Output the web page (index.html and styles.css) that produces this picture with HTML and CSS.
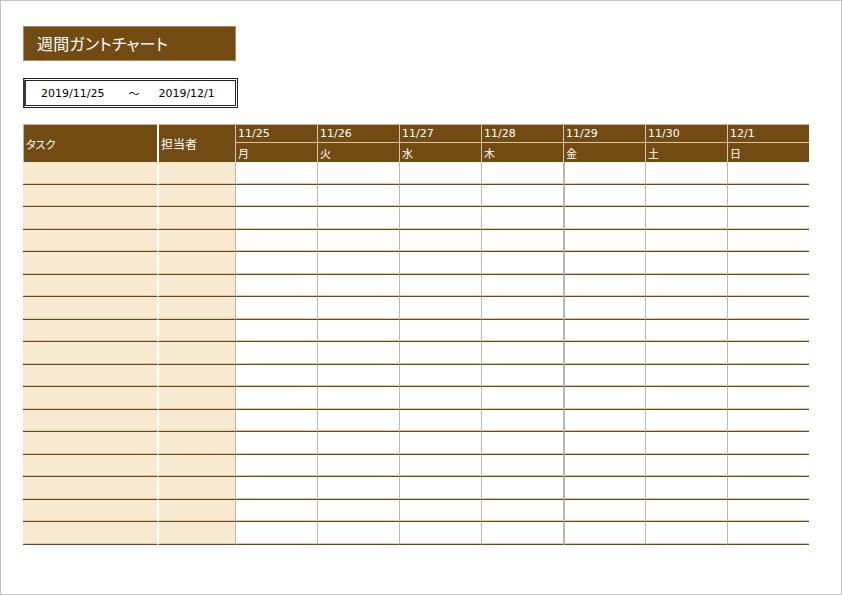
FILE: index.html
```html
<!DOCTYPE html>
<html lang="ja">
<head>
<meta charset="utf-8">
<title>週間ガントチャート</title>
<link rel="stylesheet" href="styles.css">
</head>
<body>
<div class="page">
  <div class="title">週間ガントチャート</div>
  <div class="range">
    <span class="d1">2019/11/25</span>
    <span class="tilde">～</span>
    <span class="d2">2019/12/1</span>
  </div>
  <table class="gantt">
    <colgroup>
      <col class="w-task"><col class="w-owner">
      <col class="w-day"><col class="w-day"><col class="w-day"><col class="w-day"><col class="w-day"><col class="w-day"><col class="w-last">
    </colgroup>
    <thead>
      <tr class="hr1">
        <th rowspan="2" class="h-task">タスク</th>
        <th rowspan="2" class="h-owner">担当者</th>
        <th class="hd">11/25</th><th class="hd">11/26</th><th class="hd">11/27</th><th class="hd">11/28</th><th class="hd">11/29</th><th class="hd">11/30</th><th class="hd">12/1</th>
      </tr>
      <tr class="hr2">
        <th class="hw">月</th><th class="hw">火</th><th class="hw">水</th><th class="hw">木</th><th class="hw">金</th><th class="hw">土</th><th class="hw">日</th>
      </tr>
    </thead>
    <tbody>
      <tr><td class="task"></td><td class="owner"></td><td class="day"></td><td class="day"></td><td class="day"></td><td class="day"></td><td class="day fri"></td><td class="day"></td><td class="day"></td></tr>
      <tr><td class="task"></td><td class="owner"></td><td class="day"></td><td class="day"></td><td class="day"></td><td class="day"></td><td class="day fri"></td><td class="day"></td><td class="day"></td></tr>
      <tr><td class="task"></td><td class="owner"></td><td class="day"></td><td class="day"></td><td class="day"></td><td class="day"></td><td class="day fri"></td><td class="day"></td><td class="day"></td></tr>
      <tr><td class="task"></td><td class="owner"></td><td class="day"></td><td class="day"></td><td class="day"></td><td class="day"></td><td class="day fri"></td><td class="day"></td><td class="day"></td></tr>
      <tr><td class="task"></td><td class="owner"></td><td class="day"></td><td class="day"></td><td class="day"></td><td class="day"></td><td class="day fri"></td><td class="day"></td><td class="day"></td></tr>
      <tr><td class="task"></td><td class="owner"></td><td class="day"></td><td class="day"></td><td class="day"></td><td class="day"></td><td class="day fri"></td><td class="day"></td><td class="day"></td></tr>
      <tr><td class="task"></td><td class="owner"></td><td class="day"></td><td class="day"></td><td class="day"></td><td class="day"></td><td class="day fri"></td><td class="day"></td><td class="day"></td></tr>
      <tr><td class="task"></td><td class="owner"></td><td class="day"></td><td class="day"></td><td class="day"></td><td class="day"></td><td class="day fri"></td><td class="day"></td><td class="day"></td></tr>
      <tr><td class="task"></td><td class="owner"></td><td class="day"></td><td class="day"></td><td class="day"></td><td class="day"></td><td class="day fri"></td><td class="day"></td><td class="day"></td></tr>
      <tr><td class="task"></td><td class="owner"></td><td class="day"></td><td class="day"></td><td class="day"></td><td class="day"></td><td class="day fri"></td><td class="day"></td><td class="day"></td></tr>
      <tr><td class="task"></td><td class="owner"></td><td class="day"></td><td class="day"></td><td class="day"></td><td class="day"></td><td class="day fri"></td><td class="day"></td><td class="day"></td></tr>
      <tr><td class="task"></td><td class="owner"></td><td class="day"></td><td class="day"></td><td class="day"></td><td class="day"></td><td class="day fri"></td><td class="day"></td><td class="day"></td></tr>
      <tr><td class="task"></td><td class="owner"></td><td class="day"></td><td class="day"></td><td class="day"></td><td class="day"></td><td class="day fri"></td><td class="day"></td><td class="day"></td></tr>
      <tr><td class="task"></td><td class="owner"></td><td class="day"></td><td class="day"></td><td class="day"></td><td class="day"></td><td class="day fri"></td><td class="day"></td><td class="day"></td></tr>
      <tr><td class="task"></td><td class="owner"></td><td class="day"></td><td class="day"></td><td class="day"></td><td class="day"></td><td class="day fri"></td><td class="day"></td><td class="day"></td></tr>
      <tr><td class="task"></td><td class="owner"></td><td class="day"></td><td class="day"></td><td class="day"></td><td class="day"></td><td class="day fri"></td><td class="day"></td><td class="day"></td></tr>
      <tr><td class="task"></td><td class="owner"></td><td class="day"></td><td class="day"></td><td class="day"></td><td class="day"></td><td class="day fri"></td><td class="day"></td><td class="day"></td></tr>
    </tbody>
  </table>
</div>
</body>
</html>
```
FILE: styles.css
```css
* { box-sizing: border-box; }
html, body { margin: 0; padding: 0; background: #fff; }
body {
  font-family: "DejaVu Sans", "Noto Sans CJK JP", sans-serif;
  color: #000;
}
.page {
  width: 842px;
  height: 595px;
  border: 1px solid #c3c3c3;
  padding: 25px 0 0 22px;
  display: flex;
  flex-direction: column;
  align-items: flex-start;
}
.title {
  width: 213px;
  height: 35px;
  background: #714b11;
  border: 1px solid #a88a5c;
  color: #fff;
  font-family: "Noto Sans CJK JP", sans-serif;
  font-feature-settings: "palt";
  font-size: 16px;
  line-height: 32px;
  padding-left: 13px;
  letter-spacing: 0.2px;
}
.range {
  margin-top: 17px;
  width: 215px;
  height: 30px;
  border: 3px double #222;
  border-left: 3px solid #3a3a3a;
  display: flex;
  align-items: center;
  font-size: 11px;
  padding-left: 15px;
}
.tilde { margin-left: 24px; font-family: "Noto Sans CJK JP", sans-serif; }
.d2 { margin-left: 19px; }
.gantt {
  margin-top: 16px;
  table-layout: fixed;
  border-collapse: separate;
  border-spacing: 0;
  width: 786px;
}
.w-task { width: 134px; }
.w-owner { width: 78px; }
.w-day { width: 82px; }
.w-last { width: 82px; }
.gantt th {
  background: #714b11;
  color: #fff;
  font-weight: normal;
  text-align: left;
  padding: 0 0 0 2px;
  border-top: 1px solid #c9b593;
  white-space: nowrap;
  overflow: hidden;
}
.hr1 { height: 19px; }
.hr2 { height: 19px; }
.h-task {
  font-family: "Noto Sans CJK JP", sans-serif;
  font-feature-settings: "palt";
  font-size: 11px;
  border-left: 1px solid #c9b593;
}
.h-owner {
  font-family: "Noto Sans CJK JP", sans-serif;
  font-size: 12px;
  border-left: 2px solid #fff;
}
.gantt th.hd {
  font-size: 11px;
  border-left: 1px solid #d7c6a9;
  border-bottom: 1px solid #d7c6a9;
  line-height: 16px;
}
.gantt th.hw {
  font-family: "Noto Sans CJK JP", sans-serif;
  font-size: 11px;
  border-top: none;
  border-left: 1px solid #d7c6a9;
  line-height: 16px;
}
.gantt tbody tr { height: 22.53px; }
.gantt td {
  padding: 0;
  border-bottom: 1px solid #6e4810;
  box-shadow: inset 0 -1px 0 #dcc9ac;
}
.gantt td.task { background: #f8e9d1; }
.gantt td.owner { background: #f8e9d1; border-left: 2px solid #fff; }
.gantt td.day { border-left: 1px solid #b9b9b9; }
.gantt td.day.fri { border-left: 2px solid #b9b9b9; }
```
